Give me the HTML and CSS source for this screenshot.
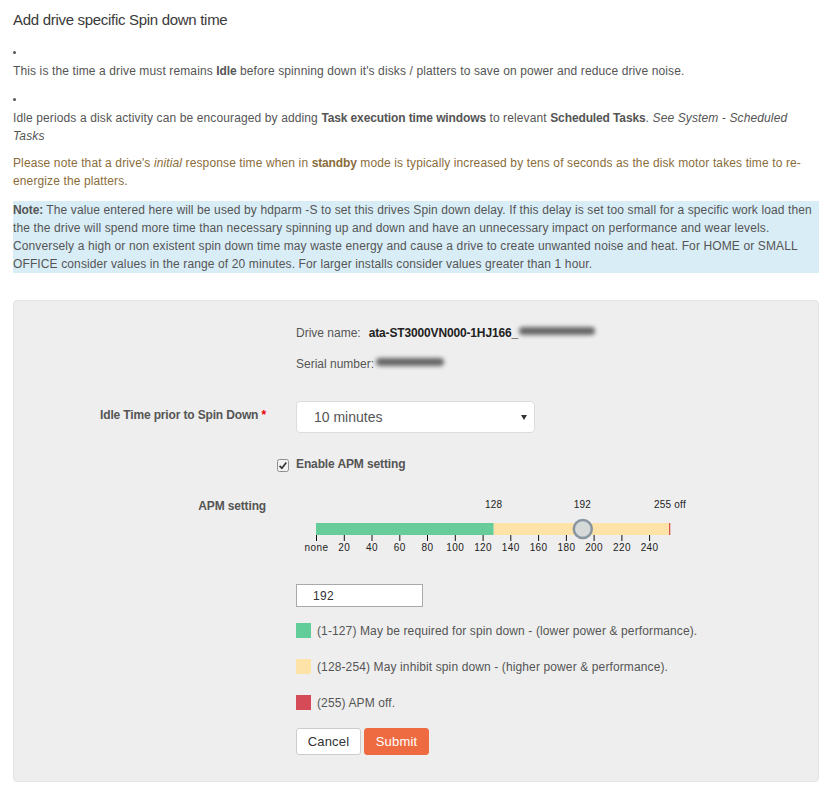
FILE: index.html
```html
<!DOCTYPE html>
<html>
<head>
<meta charset="utf-8">
<title>Spin down</title>
<link rel="stylesheet" href="styles.css">
</head>
<body>
<div class="page">
  <h3 class="title">Add drive specific Spin down time</h3>

  <div class="bullet"><span class="dot"></span></div>
  <p class="para">This is the time a drive must remains <b>Idle</b> before spinning down it's disks / platters to save on power and reduce drive noise.</p>

  <div class="bullet second"><span class="dot"></span></div>
  <p class="para">Idle periods a disk activity can be encouraged by adding <b>Task execution time windows</b> to relevant <b>Scheduled Tasks</b>. <i>See System - Scheduled<br>Tasks</i></p>

  <p class="para warn">Please note that a drive's <i>initial</i> response time when in <b>standby</b> mode is typically increased by tens of seconds as the disk motor takes time to re-<br>energize the platters.</p>

  <p class="para note"><b>Note:</b> The value entered here will be used by hdparm -S to set this drives Spin down delay. If this delay is set too small for a specific work load then<br>the the drive will spend more time than necessary spinning up and down and have an unnecessary impact on performance and wear levels.<br>Conversely a high or non existent spin down time may waste energy and cause a drive to create unwanted noise and heat. For HOME or SMALL<br>OFFICE consider values in the range of 20 minutes. For larger installs consider values greater than 1 hour.</p>

  <div class="panel">
    <div class="row">
      <div class="lbl"></div>
      <div class="ctl">
        <div class="info">Drive name:<b class="dn">ata-ST3000VN000-1HJ166_</b><span class="blob blob-dn"></span></div>
        <div class="info serial">Serial number:<span class="blob blob-sn"></span></div>
      </div>
    </div>

    <div class="row idle">
      <div class="lbl lbl-pad">Idle Time prior to Spin Down <span class="req">*</span></div>
      <div class="ctl">
        <div class="select"><span>10 minutes</span><svg class="caret" width="6" height="5" viewBox="0 0 6 5"><path d="M0 0H6L3 5Z" fill="#333"/></svg></div>
      </div>
    </div>

    <div class="row check-row">
      <div class="lbl"></div>
      <div class="ctl">
        <div class="check">
          <svg class="cb" width="12" height="13" viewBox="0 0 12 13"><rect x="0.5" y="0.5" width="11" height="12" rx="2" fill="#f2f2f2" stroke="#8e8e8e"/><path d="M2.6 6.9 L4.9 9.3 L9.3 3.6" fill="none" stroke="#333" stroke-width="1.7"/></svg>
          <b>Enable APM setting</b>
        </div>
      </div>
    </div>

    <div class="row apm">
      <div class="lbl">APM setting</div>
      <div class="ctl">
        <svg class="slider" width="404" height="58" viewBox="0 0 404 58">
          <g font-size="10" fill="#222" text-anchor="middle" letter-spacing="0.2">
            <text x="197.7" y="11">128</text>
            <text x="286.5" y="11">192</text>
            <text x="374" y="11">255 off</text>
          </g>
          <rect x="20" y="26" width="177.7" height="12" fill="#66cc99"/>
          <rect x="197.7" y="26" width="176.3" height="12" fill="#fde3a7"/>
          <rect x="373" y="26" width="1.3" height="12" fill="#d9534f"/>
          <g stroke="#111" stroke-width="1">
            <line x1="20.5" y1="38" x2="20.5" y2="44"/>
            <line x1="48.3" y1="38" x2="48.3" y2="44"/>
            <line x1="76" y1="38" x2="76" y2="44"/>
            <line x1="103.8" y1="38" x2="103.8" y2="44"/>
            <line x1="131.5" y1="38" x2="131.5" y2="44"/>
            <line x1="159.3" y1="38" x2="159.3" y2="44"/>
            <line x1="187.1" y1="38" x2="187.1" y2="44"/>
            <line x1="214.8" y1="38" x2="214.8" y2="44"/>
            <line x1="242.6" y1="38" x2="242.6" y2="44"/>
            <line x1="270.4" y1="38" x2="270.4" y2="44"/>
            <line x1="298.1" y1="38" x2="298.1" y2="44"/>
            <line x1="325.9" y1="38" x2="325.9" y2="44"/>
            <line x1="353.6" y1="38" x2="353.6" y2="44"/>
          </g>
          <g font-size="10" fill="#222" text-anchor="middle" letter-spacing="0.4">
            <text x="20.5" y="54">none</text>
            <text x="48.3" y="54">20</text>
            <text x="76" y="54">40</text>
            <text x="103.8" y="54">60</text>
            <text x="131.5" y="54">80</text>
            <text x="159.3" y="54">100</text>
            <text x="187.1" y="54">120</text>
            <text x="214.8" y="54">140</text>
            <text x="242.6" y="54">160</text>
            <text x="270.4" y="54">180</text>
            <text x="298.1" y="54">200</text>
            <text x="325.9" y="54">220</text>
            <text x="353.6" y="54">240</text>
          </g>
          <circle cx="286.8" cy="32" r="9" fill="#d5dad8" stroke="#8795a0" stroke-width="2.5"/>
        </svg>

        <input class="num" type="text" value="192">

        <div class="legend">
          <div class="li"><span class="sq green"></span>(1-127) May be required for spin down - (lower power &amp; performance).</div>
          <div class="li"><span class="sq yellow"></span>(128-254) May inhibit spin down - (higher power &amp; performance).</div>
          <div class="li"><span class="sq red"></span>(255) APM off.</div>
        </div>

        <div class="buttons">
          <button class="btn cancel" type="button">Cancel</button>
          <button class="btn submit" type="button">Submit</button>
        </div>
      </div>
    </div>
  </div>
</div>
</body>
</html>
```

FILE: styles.css
```css
body {
  margin: 0;
  background: #fff;
  font-family: "Liberation Sans", Arial, Helvetica, sans-serif;
  font-size: 12px;
  line-height: 18px;
  color: #555;
  letter-spacing: 0.12px;
}

b {
  letter-spacing: -0.12px;
}

.page {
  padding: 0 14px 12px 13px;
}

.title {
  margin: 10px 0 0;
  font-size: 15px;
  line-height: 20px;
  font-weight: normal;
  color: #3a3a3a;
  letter-spacing: -0.3px;
}

p {
  margin: 0;
}

.bullet {
  height: 18px;
  box-sizing: border-box;
  padding-top: 7px;
  margin-top: 14px;
}

.bullet.second {
  margin-top: 11px;
}

.dot {
  display: block;
  width: 3px;
  height: 3px;
  border-radius: 50%;
  background: #555;
}

.para {
  white-space: nowrap;
}

.warn {
  margin-top: 9px;
  color: #8a6d3b;
}

.note {
  margin-top: 11px;
  background: #d9edf7;
}

.panel {
  margin-top: 27px;
  background: #eeeeee;
  border: 1px solid #e3e3e3;
  border-radius: 4px;
  padding: 23px 0 26px;
}

.row {
  display: grid;
  grid-template-columns: 267px 1fr;
}

.lbl {
  padding-right: 15px;
  text-align: right;
  font-weight: bold;
  letter-spacing: -0.15px;
}

.ctl {
  padding-left: 15px;
}

.info {
  white-space: nowrap;
  letter-spacing: 0;
}

.info.serial {
  margin-top: 13px;
}

.dn {
  margin-left: 8px;
  color: #222;
  letter-spacing: -0.15px;
}

.blob {
  display: inline-block;
  height: 8px;
  vertical-align: 2px;
  background: #666;
  border-radius: 4px;
  filter: blur(2.2px);
}

.blob-dn {
  width: 76px;
  margin-left: 1px;
}

.blob-sn {
  width: 68px;
  margin-left: 2px;
}

.idle {
  margin-top: 28px;
}

.lbl-pad {
  padding-top: 5px;
}

.req {
  color: #e00;
}

.select {
  width: 239px;
  height: 32px;
  box-sizing: border-box;
  border: 1px solid #dcdcdc;
  border-radius: 4px;
  background: #fff;
  display: flex;
  align-items: center;
  justify-content: space-between;
  padding: 0 7px 0 17px;
  font-size: 14px;
  color: #555;
  letter-spacing: 0;
}

.caret {
  display: block;
}

.check-row {
  margin-top: 22px;
}

.check {
  display: flex;
  align-items: flex-start;
  height: 18px;
}

.cb {
  display: block;
  margin: 4px 7px 0 -19px;
}

.apm {
  margin-top: 24px;
}

.slider {
  display: block;
  margin-left: -0.5px;
  font-family: "Liberation Sans", Arial, sans-serif;
}

.num {
  display: block;
  margin: 29px 0 0;
  width: 127px;
  height: 23px;
  box-sizing: border-box;
  border: 1px solid #a9a9a9;
  background: #fff;
  padding: 0 0 0 16px;
  font-family: inherit;
  font-size: 12px;
  letter-spacing: 0.3px;
  color: #333;
  outline: none;
}

.legend {
  margin-top: 16px;
  display: flex;
  flex-direction: column;
  gap: 21px;
}

.li {
  display: flex;
  align-items: center;
  height: 15px;
  white-space: nowrap;
}

.sq {
  width: 15px;
  height: 15px;
  margin-right: 6px;
  flex: none;
}

.sq.green {
  background: #63cd99;
}

.sq.yellow {
  background: #fde3a7;
}

.sq.red {
  background: #d64b58;
}

.buttons {
  margin-top: 18px;
  display: flex;
  gap: 3px;
}

.btn {
  width: 65px;
  height: 27px;
  box-sizing: border-box;
  border-radius: 3px;
  font-family: inherit;
  font-size: 13px;
  letter-spacing: 0.2px;
  padding: 0;
  cursor: pointer;
}

.cancel {
  background: #fff;
  border: 1px solid #ccc;
  color: #333;
}

.submit {
  background: #ee6a40;
  border: 1px solid #ee6a40;
  color: #fff;
}
```
